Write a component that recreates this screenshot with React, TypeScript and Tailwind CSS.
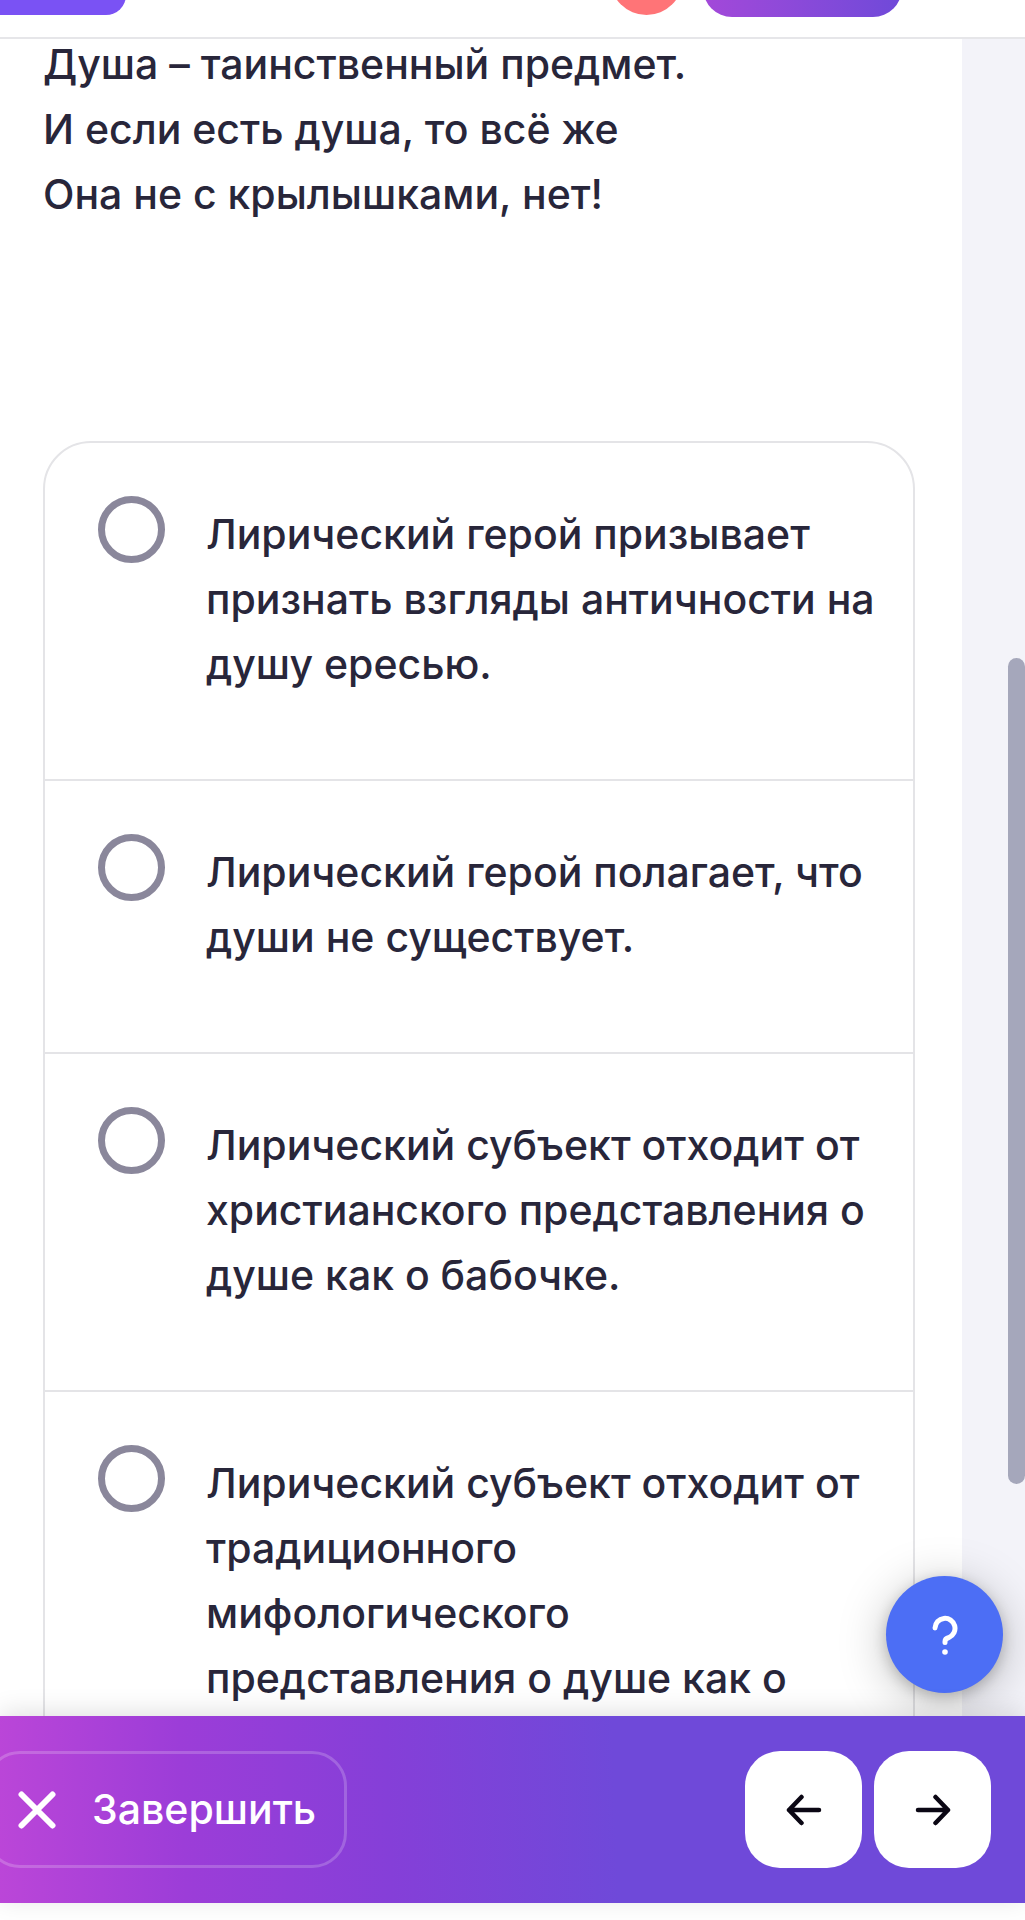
import React, { useState } from 'react';

const verse = [
    "Душа – таинственный предмет.",
    "И если есть душа, то всё же",
    "Она не с крылышками, нет!"
];

const answers = [
    { id: 1, text: "Лирический герой призывает признать взгляды античности на душу ересью." },
    { id: 2, text: "Лирический герой полагает, что души не существует." },
    { id: 3, text: "Лирический субъект отходит от христианского представления о душе как о бабочке." },
    { id: 4, text: "Лирический субъект отходит от традиционного мифологического представления о душе как о" }
];

function ArrowIcon({ className = "" }: { className?: string }) {
    return (
        <svg viewBox="0 0 36 32" className={`w-9 h-8 ${className}`} fill="none" stroke="currentColor" strokeWidth="4.5" strokeLinecap="round" strokeLinejoin="round" aria-hidden="true">
            <path d="M3 16H33M20.500 3L33 16L20.500 29" />
        </svg>
    );
}

export default function App() {
    const [selected, setSelected] = useState<number | null>(null);

    return (
        <div className="h-screen flex flex-col overflow-hidden bg-white pb-[17px] font-['Inter',sans-serif] text-[41px] leading-[65px] font-medium text-[#28263a]">
            {/* TOP BAR */}
            <header className="relative z-10 h-[39px] shrink-0 flex items-end overflow-hidden bg-white border-b-2 border-[#e6e6e9] pb-5 pr-[123px]">
                <button aria-label="Меню" className="mb-0.5 h-20 w-[126px] shrink-0 rounded-br-[20px] bg-[#7a52f4]" />
                <div className="ml-auto flex items-end gap-5">
                    <button aria-label="Уведомления" className="mb-0.5 size-[73px] shrink-0 rounded-full bg-[#ff7477]" />
                    <button aria-label="Профиль" className="h-20 w-[199px] shrink-0 rounded-[29px] bg-linear-to-r from-[#a348d9] to-[#6f49d9]" />
                </div>
            </header>

            {/* QUESTION */}
            <div className="relative flex-1 min-h-0 bg-[#f3f3f9] pr-[63px]">
                <main className="h-full overflow-hidden bg-white pl-[43px] pr-[47px]">
                    <div className="-mt-[7px]">
                        {verse.map(line => <p key={line}>{line}</p>)}
                    </div>

                    <fieldset className="mt-[214px] rounded-[48px] border-2 border-[#e4e4e7] divide-y-2 divide-[#e4e4e7]">
                        {answers.map(answer => (
                            <label key={answer.id} className="flex items-start gap-[41px] pl-[53px] pr-8 pt-[53px] pb-[82px] cursor-pointer">
                                <input
                                    type="radio"
                                    name="answer"
                                    checked={selected === answer.id}
                                    onChange={() => setSelected(answer.id)}
                                    className="appearance-none size-[67px] shrink-0 rounded-full border-[7px] border-[#8a879b] checked:border-[20px] checked:border-[#6f49d9]"
                                />
                                <span className="max-w-[672px] pt-[6px]">{answer.text}</span>
                            </label>
                        ))}
                    </fieldset>
                </main>

                <div className="absolute right-0 top-[619px] h-[826px] w-[17px] rounded-full bg-[#a5a7bb]" />

                <button aria-label="Помощь" className="absolute right-[22px] bottom-[23px] size-[117px] rounded-full bg-[#4c6ef5] text-white flex items-center justify-center shadow-[0_8px_48px_rgba(0,0,0,0.25),0_4px_14px_rgba(0,0,0,0.2)]">
                    <svg viewBox="0 0 26 40" className="w-[26px] h-10" fill="none" stroke="currentColor" strokeWidth="5" strokeLinecap="round" aria-hidden="true">
                        <path d="M3 13A10 10 0 1 1 17 22.500Q13 23.500 13 26.500V27.500" />
                        <circle cx="13" cy="37" r="2.8" fill="currentColor" stroke="none" />
                    </svg>
                </button>
            </div>

            {/* BOTTOM BAR */}
            <footer className="relative shrink-0 flex items-center justify-between py-[35px] pr-[34px] shadow-[0_-4px_24px_rgba(0,0,0,0.12)] bg-[linear-gradient(88deg,#bb46d8_0%,#9c3dd8_18%,#853fd8_38%,#6f49d9_60%)]">
                <button className="-ml-[15px] h-[117px] flex items-center gap-9 rounded-[35px] border-3 border-white/20 pl-[30px] pr-7 text-white">
                    <svg viewBox="0 0 38 38" className="size-[38px]" fill="none" stroke="currentColor" strokeWidth="6" strokeLinecap="round" aria-hidden="true">
                        <path d="M3.500 3.500L34.500 34.500M34.500 3.500L3.500 34.500" />
                    </svg>
                    Завершить
                </button>
                <div className="flex gap-3">
                    <button aria-label="Назад" className="size-[117px] rounded-[35px] bg-white text-[#0b0714] flex items-center justify-center">
                        <ArrowIcon className="rotate-180" />
                    </button>
                    <button aria-label="Вперёд" className="size-[117px] rounded-[35px] bg-white text-[#0b0714] flex items-center justify-center">
                        <ArrowIcon />
                    </button>
                </div>
            </footer>
        </div>
    );
}
